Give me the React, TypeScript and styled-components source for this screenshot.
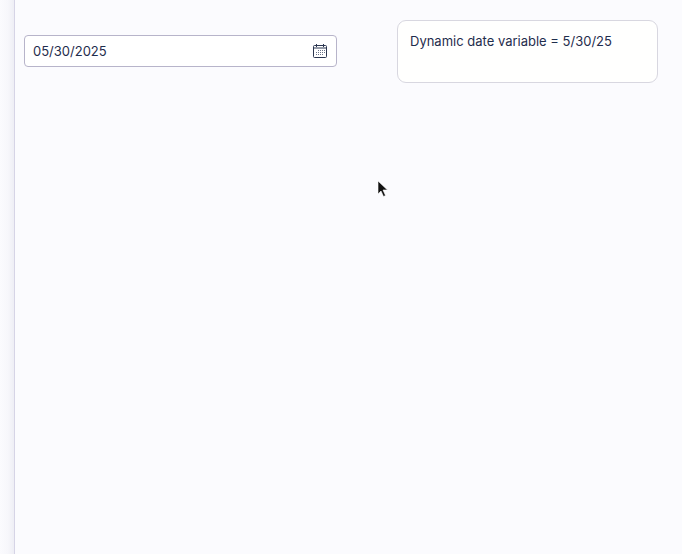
import React from 'react';
import styled, { createGlobalStyle } from 'styled-components';

const Global = createGlobalStyle`
  html, body {
    margin: 0;
    padding: 0;
    background: #fbfbfe;
    overflow: hidden;
  }
`;

const Page = styled.div`
  position: relative;
  width: 682px;
  height: 554px;
  box-sizing: border-box;
  display: flex;
  background: #fbfbfe;
  font-family: Inter, "Liberation Sans", sans-serif;
  font-size: 13px;
  color: #1f2d4d;
`;

const Rail = styled.div`
  width: 15px;
  flex: none;
  box-sizing: border-box;
  background: linear-gradient(to right, #fbfbfe 0, #f7f7fb 8px, #eeeef5 14px);
  border-right: 1px solid #d6d4e6;
`;

const Content = styled.div`
  flex: 1;
  display: flex;
  align-items: flex-start;
  padding: 20px 24px 0 9px;
  gap: 60px;
`;

const DateField = styled.div`
  width: 313px;
  height: 32px;
  margin-top: 15px;
  box-sizing: border-box;
  display: flex;
  align-items: center;
  justify-content: space-between;
  padding: 0 8px;
  background: #fff;
  border: 1px solid #b7b4ca;
  border-radius: 4px;
`;

const Note = styled.div`
  width: 261px;
  height: 63px;
  box-sizing: border-box;
  padding: 12px 12px;
  line-height: 16px;
  background: #fffffe;
  border: 1px solid #d8d7e0;
  border-radius: 9px;
`;

const Pointer = styled.svg`
  position: absolute;
  left: 377px;
  top: 180px;
`;

const CalendarIcon = () => (
  <svg width="16" height="16" viewBox="0 0 16 16" fill="none">
    <rect x="1.5" y="2.5" width="13" height="12" rx="1" stroke="#2b3650" />
    <path d="M1.5 5h13M4.5 1v3M11.5 1v3" stroke="#2b3650" />
    <path
      d="M6 7.5h1M8 7.5h1M10 7.5h1M12 7.5h1M4 9.5h1M6 9.5h1M8 9.5h1M10 9.5h1M12 9.5h1M4 11.5h1M6 11.5h1M8 11.5h1M10 11.5h1"
      stroke="#6a7388"
      strokeWidth="1"
    />
  </svg>
);

const App = () => (
  <Page>
    <Global />
    <Rail />
    <Content>
      <DateField>
        <span>05/30/2025</span>
        <CalendarIcon />
      </DateField>
      <Note>Dynamic date variable = 5/30/25</Note>
    </Content>
    <Pointer width="12" height="18" viewBox="0 0 12 18">
      <path d="M1 1v13l3-3 2.5 5.5 2-1L6 10h4.5z" fill="#111" stroke="#fff" strokeWidth="0.6" />
    </Pointer>
  </Page>
);

export default App;
